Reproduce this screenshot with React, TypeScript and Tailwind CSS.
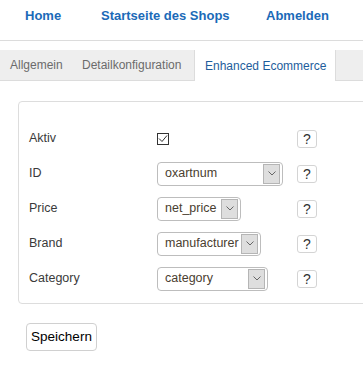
export default function App() {
  const rows = [
    { label: "ID", value: "oxartnum", width: "w-[126px]" },
    { label: "Price", value: "net_price", width: "w-[84px]" },
    { label: "Brand", value: "manufacturer", width: "w-[104px]" },
    { label: "Category", value: "category", width: "w-[111px]" },
  ];

  const Help = () => (
    <button className="w-[20px] h-[18px] border border-[#d4d4d4] rounded-[3px] bg-white text-[14px] leading-none text-[#333] flex items-center justify-center">
      ?
    </button>
  );

  return (
    <div className="w-[363px] h-[374px] bg-white overflow-hidden font-['Liberation_Sans',Arial,sans-serif] text-[12.5px]">
      {/* top nav */}
      <div className="h-[41px] border-b border-[#dcdcdc] flex items-center pl-[25px] pb-[9px] text-[13px] font-bold text-[#1b6ab8] whitespace-nowrap">
        <span className="w-[76px]">Home</span>
        <span className="w-[165px]">Startseite des Shops</span>
        <span>Abmelden</span>
      </div>

      {/* tabs */}
      <div className="mt-[9px] h-[31px] bg-[#eeeeee] border-b border-[#dcdcdc] flex text-[12px] text-[#6b6b6b] whitespace-nowrap">
        <div className="w-[71px] pl-[10px] flex items-center">Allgemein</div>
        <div className="w-[123px] pl-[11px] flex items-center">Detailkonfiguration</div>
        <div className="w-[142px] pl-[10px] flex items-center bg-white border-x border-[#dcdcdc] text-[#1e5d9c] h-[31px]">
          Enhanced Ecommerce
        </div>
      </div>

      {/* panel */}
      <div className="ml-[18px] mt-[20px] w-[360px] border border-[#dddddd] rounded-[4px] pl-[10px] pt-[19px] pb-[7px] text-[#3a3a3a]">
        <div className="grid grid-cols-[128px_140px_24px] auto-rows-[35px] items-center">
          <span>Aktiv</span>
          <div>
            <div className="w-[12px] h-[12px] border border-[#333] flex items-center justify-center">
              <svg width="10" height="9" viewBox="0 0 10 9">
                <path d="M1 4.5 L4 7.5 L9 1.5" fill="none" stroke="#333" strokeWidth="1" />
              </svg>
            </div>
          </div>
          <Help />

          {rows.map((r) => (
            <>
              <span key={r.label + "l"}>{r.label}</span>
              <div key={r.label + "s"}>
                <div
                  className={`${r.width} h-[24px] border border-[#bdbdbd] rounded-[4px] flex items-center justify-between pl-[7px] pr-[2px] text-[#4a4030] text-[12.5px] whitespace-nowrap`}
                >
                  <span>{r.value}</span>
                  <span className="w-[17px] h-[20px] shrink-0 bg-[#dedede] border border-[#b5b5b5] flex items-center justify-center">
                    <svg width="8" height="5" viewBox="0 0 8 5">
                      <path d="M0.5 0.5 L4 4 L7.5 0.5" fill="none" stroke="#666" strokeWidth="1" />
                    </svg>
                  </span>
                </div>
              </div>
              <Help key={r.label + "h"} />
            </>
          ))}
        </div>
      </div>

      <button className="ml-[26px] mt-[19px] w-[71px] h-[28px] border border-[#d0d0d0] rounded-[4px] bg-white text-[13.5px] text-black">
        Speichern
      </button>
    </div>
  );
}
